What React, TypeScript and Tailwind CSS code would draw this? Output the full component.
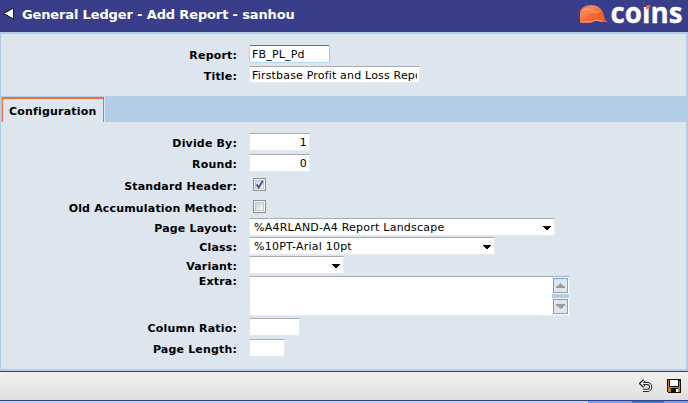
import type { ReactNode } from "react";

const sunken =
  "border border-t-[#a9abb3] border-x-[#e6eaf0] border-b-[#e6eaf0] bg-white rounded-[1px]";

function Row({ label, className, labelClass = "", children }: { label: string; className: string; labelClass?: string; children: ReactNode }) {
  return (
    <div className={`flex items-start ${className}`}>
      <label className={`mr-3 w-[236px] shrink-0 whitespace-nowrap text-right font-bold leading-[14px] tracking-[0.17px] ${labelClass}`}>
        {label}
      </label>
      {children}
    </div>
  );
}

function TextField({ value = "", className }: { value?: string; className: string }) {
  return (
    <input
      defaultValue={value}
      className={`block px-[2px] pt-px text-[11px] leading-[14px] tracking-[0.18px] outline-none ${className}`}
    />
  );
}

function SelectField({ value = "", className }: { value?: string; className: string }) {
  return (
    <div className={`flex h-[18px] items-center justify-between pl-1 pr-[3px] pt-[2px] ${sunken} ${className}`}>
      <span className="whitespace-nowrap leading-[14px] tracking-[0.23px]">{value}</span>
      <svg width="8" height="4" viewBox="0 0 8 4" shapeRendering="crispEdges">
        <path d="M0 0h8v1H7v1H6v1H5v1H3V3H2V2H1V1H0z" fill="#000" />
      </svg>
    </div>
  );
}

function CheckField({ checked = false }: { checked?: boolean }) {
  return (
    <span role="checkbox" aria-checked={checked} className="ml-1 block h-[13px] w-[13px] border border-[#8e8f8f] bg-[#f4f4f4] p-px">
      <span className="block h-[9px] w-[9px] border border-[#c3c6ca] bg-linear-to-br from-[#cfd3da] to-[#f6f6f6]">
        {checked && (
          <svg width="9" height="9" viewBox="0 0 9 9" className="-ml-px -mt-px">
            <path d="M1.5 4.5 3.7 7.5 7.7 1" fill="none" stroke="#41549a" strokeWidth="1.9" />
          </svg>
        )}
      </span>
    </span>
  );
}

function ScrollButton({ down = false }: { down?: boolean }) {
  return (
    <div className="flex h-[15px] w-[15px] items-center justify-center border border-b-[#9b9ea6] border-l-[#6f9bea] border-r-[#9b9ea6] border-t-[#6f9bea] bg-[#dde5ee]">
      <svg width="9" height="5" viewBox="0 0 9 5" shapeRendering="crispEdges" className={down ? "rotate-180" : ""}>
        <path d="M4 0h1v1h1v1h1v1h2v2H0V3h2V2h1V1h1z" fill="#9d9da3" />
        <path d={down ? "M0 3h2v1H0zM2 1h1v2H2z" : "M2 4h6v1H2z"} fill="#6f9bea" />
      </svg>
    </div>
  );
}

function Logo() {
  return (
    <svg width="108" height="32" viewBox="0 0 108 32" className="block overflow-visible">
      <defs>
        <linearGradient id="helmet" x1="0" y1="0" x2="1" y2="1">
          <stop offset="0" stopColor="#f26b35" />
          <stop offset=".3" stopColor="#f8875a" />
          <stop offset=".5" stopColor="#f36a32" />
          <stop offset="1" stopColor="#ec5726" />
        </linearGradient>
      </defs>
      <path d="M0 22.8V12C1 8 5 5 11 5c8 0 12 5 13 11l1 3.5 3 2.8-6-.4-6-1.2-5 2.1z" fill="url(#helmet)" />
      <path d="M3 10c4-2 7-1 10 1.500c3 2 5 1 6-1" fill="none" stroke="#ffb48d" strokeWidth="1.3" opacity=".65" />
      <path d="M1 22h9l5-1.800 7 1" fill="none" stroke="#ffc2a0" strokeWidth=".7" />
      <text x="30.500" y="22.500" textLength="72" lengthAdjust="spacingAndGlyphs" fill="#fff" stroke="#fff" strokeWidth=".3" fontSize="28" fontWeight="700" fontFamily="'Open Sans', 'Noto Sans', sans-serif">coins</text>
      <path d="M64 0h8v6.800h-8z" fill="#393e8b" />
      <path d="m66 5.600 4.400-.8-1 3.400-3.400 1.400z" fill="#f26a36" />
    </svg>
  );
}

export default function App() {
  return (
    <div className="flex h-[403px] w-[688px] flex-col overflow-hidden bg-[#b4cde6] font-['Verdana','DejaVu_Sans',sans-serif] text-[11px] text-black">
      <header className="flex h-8 shrink-0 items-start justify-between bg-[#393e8b]">
        <div className="flex items-start pl-[3px] pt-[7px]">
          <svg width="12" height="13" viewBox="0 0 12 13">
            <path d="M.5 6.500 10.500 1v11z" fill="#fff" stroke="#111" />
          </svg>
          <h1 className="ml-[7px] whitespace-nowrap text-[13px] font-bold leading-4 tracking-[-0.14px] text-white">
            General Ledger - Add Report - sanhou
          </h1>
        </div>
        <Logo />
      </header>

      <main className="flex h-[339px] shrink-0 flex-col pb-[2px] pl-px pr-[2px] pt-[2px]">
        <section className="h-[62px] bg-[#dde5ee] pt-[11px]">
          <Row label="Report:" className="h-[21px]" labelClass="pt-[4px]">
            <TextField value="FB_PL_Pd" className="h-[18px] w-[81px] rounded-[2px] border border-b-[#b3d7ee] border-l-[#b9d2e6] border-r-[#a9c8df] border-t-[#3d7bad] bg-white" />
          </Row>
          <Row label="Title:" className="h-[17px]" labelClass="pt-[4px]">
            <TextField value="Firstbase Profit and Loss Report" className={`h-[17px] w-[171px] ${sunken}`} />
          </Row>
        </section>

        <nav className="flex h-[26px] items-end pl-px">
          <div className="flex h-[25px] w-[102px] items-center whitespace-nowrap border-x border-t-2 border-[#f36c35] bg-[#dde5ee] pl-[6px] pt-[3px] font-bold tracking-[0.2px]">
            Configuration
          </div>
          <div className="h-[25px] w-px bg-[#dde5ee]" />
        </nav>

        <section className="flex-1 bg-[#dde5ee] pt-[11px]">
          <Row label="Divide By:" className="h-[21px]" labelClass="pt-[4px]">
            <TextField value="1" className={`h-[18px] w-[61px] text-right ${sunken}`} />
          </Row>
          <Row label="Round:" className="h-[24px]" labelClass="pt-[4px]">
            <TextField value="0" className={`h-[18px] w-[61px] text-right ${sunken}`} />
          </Row>
          <Row label="Standard Header:" className="h-[22px]" labelClass="pt-[2px]">
            <CheckField checked />
          </Row>
          <Row label="Old Accumulation Method:" className="h-[18px]" labelClass="pt-[2px]">
            <CheckField />
          </Row>
          <Row label="Page Layout:" className="h-[19px]" labelClass="pt-[4px]">
            <SelectField value="%A4RLAND-A4 Report Landscape" className="w-[306px]" />
          </Row>
          <Row label="Class:" className="h-[19px]" labelClass="pt-[4px]">
            <SelectField value="%10PT-Arial 10pt" className="w-[246px]" />
          </Row>
          <Row label="Variant:" className="h-[20px]" labelClass="pt-[4px]">
            <SelectField className="w-[95px]" />
          </Row>
          <Row label="Extra:" className="h-[42px]" labelClass="-mt-px">
            <div className={`flex h-[40px] w-[321px] justify-end ${sunken}`}>
              <div className="flex w-[17px] flex-col items-center justify-between bg-[#b4cde6]">
                <div className="bg-white p-px"><ScrollButton /></div>
                <div className="bg-white p-px"><ScrollButton down /></div>
              </div>
            </div>
          </Row>
          <Row label="Column Ratio:" className="h-[21px]" labelClass="pt-[4px]">
            <TextField className={`h-[18px] w-[51px] ${sunken}`} />
          </Row>
          <Row label="Page Length:" className="h-[18px]" labelClass="pt-[4px]">
            <TextField className={`h-[18px] w-[36px] ${sunken}`} />
          </Row>
        </section>
      </main>

      <footer className="flex h-[30px] shrink-0 items-center justify-end gap-[14px] border-y border-[#343e8a] bg-linear-to-b from-[#f0f0f0] via-[#e8e8e8] to-[#e0e0e0] pr-[7px]">
        <svg width="14" height="14" viewBox="0 0 14 14">
          <path d="M2 4.500h6.200a3.300 3.300 0 0 1 0 6.900H4M5.200 1.300 1.800 4.500l3.400 3.200" fill="none" stroke="#25292d" strokeWidth="3.200" />
          <path d="M2 4.500h6.200a3.300 3.300 0 0 1 0 6.900H4M5 1.800 2.200 4.500 5 7.200" fill="none" stroke="#f5f5f5" strokeWidth="1.100" />
        </svg>
        <svg width="14" height="14" viewBox="0 0 14 14" shapeRendering="crispEdges">
          <path d="M0 0h14v14H1l-1-1z" fill="#111" />
          <path d="M1 1h1v7h10V2h1v11H1z" fill="#cf7a18" />
          <path d="M3 1h8v6H3z" fill="#fff" />
          <path d="M4 9h7v4H4z" fill="#111" />
          <path d="M9 10h2v3H9z" fill="#fff" />
        </svg>
      </footer>
      <div className="flex h-[2px] shrink-0 bg-[#bfd6f1]">
        <div className="ml-[588px] w-11 bg-[#65a8ed]" />
        <div className="w-8 bg-[#2c82ca]" />
        <div className="flex-1 bg-[#5ca5e4]" />
      </div>
    </div>
  );
}
